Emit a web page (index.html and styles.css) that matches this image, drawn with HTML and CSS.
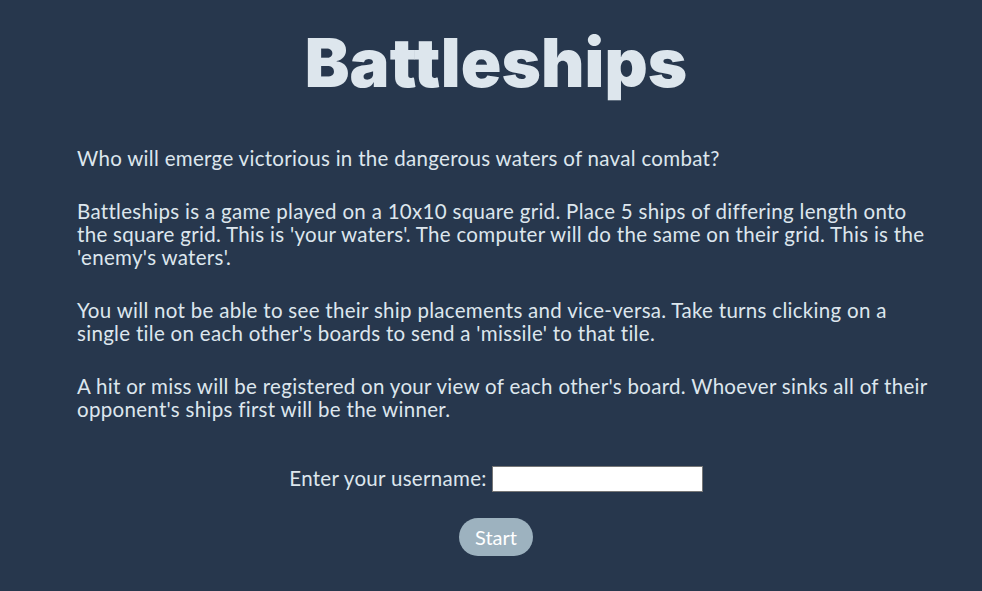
FILE: index.html
```html
<!DOCTYPE html>
<html lang="en">
<head>
<meta charset="utf-8">
<title>Battleships</title>
<link rel="stylesheet" href="styles.css">
</head>
<body>
<main class="page">
  <h1 class="title">Battleships</h1>
  <section class="intro">
    <p>Who will emerge victorious in the dangerous waters of naval combat?</p>
    <p>Battleships is a game played on a 10x10 square grid. Place 5 ships of differing length onto the square grid. This is 'your waters'. The computer will do the same on their grid. This is the 'enemy's waters'.</p>
    <p>You will not be able to see their ship placements and vice-versa. Take turns clicking on a single tile on each other's boards to send a 'missile' to that tile.</p>
    <p>A hit or miss will be registered on your view of each other's board. Whoever sinks all of their opponent's ships first will be the winner.</p>
  </section>
  <form class="start-form">
    <div class="field">
      <label for="username" class="label">Enter your username:</label>
      <input id="username" class="input" type="text">
    </div>
    <button type="button" class="start-btn">Start</button>
  </form>
</main>
</body>
</html>
```

FILE: styles.css
```css
html, body {
  margin: 0;
  padding: 0;
  background: #27374d;
}
body {
  color: #dde6ed;
  font-family: Lato, Inter, "Noto Sans", sans-serif;
  min-height: 591px;
}
.page {
  padding: 23px 67px 0 77px;
}
.title {
  margin: 0;
  text-align: center;
  font-family: Inter, sans-serif;
  font-size: 67px;
  font-weight: 900;
  line-height: 80px;
  letter-spacing: 0.1px;
  color: #dde6ed;
}
.intro {
  margin: 44px -18px 0 0;
}
.intro p {
  margin: 0 0 30px;
  font-size: 20.5px;
  line-height: 23px;
  letter-spacing: 0.3px;
}
.start-form {
  display: flex;
  flex-direction: column;
  align-items: center;
  margin-top: 43px;
}
.field {
  display: flex;
  align-items: center;
  gap: 5px;
  font-size: 20.5px;
  letter-spacing: 0.3px;
}
.input {
  width: 211px;
  height: 26px;
  margin-top: 2px;
  box-sizing: border-box;
  border: 1px solid #767676;
  background: #fff;
  padding: 0 4px;
}
.start-btn {
  margin-top: 26px;
  width: 74px;
  height: 38px;
  border: none;
  border-radius: 19px;
  background: #9db2bf;
  color: #fff;
  font-family: inherit;
  font-size: 20px;
}
```
